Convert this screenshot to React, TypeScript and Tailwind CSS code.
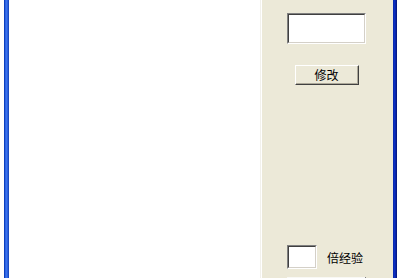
import React from "react";

const cjk = "font-['SimSun','Noto_Sans_CJK_SC',sans-serif]";

function SunkenBox({ className }: { className: string }) {
  // classic sunken edit box: dark top/left, light bottom/right
  return (
    <div
      className={`border-t-[#808080] border-l-[#808080] border-b-[#ffffff] border-r-[#ffffff] border ${className}`}
    >
      <div className="h-full w-full border border-t-[#404040] border-l-[#404040] border-b-[#d4d0c8] border-r-[#d4d0c8] bg-white" />
    </div>
  );
}

export default function App() {
  return (
    <div className="flex h-[278px] w-[401px] overflow-hidden bg-white">
      {/* left window frame */}
      <div className="w-[4px] bg-white" />
      <div className="flex w-[5px]">
        <div className="w-px bg-[#0b3fc0]" />
        <div className="w-px bg-[#2e64e0]" />
        <div className="w-px bg-[#3a72ee]" />
        <div className="w-px bg-[#2d62dc]" />
        <div className="w-px bg-[#1a4ac4]" />
      </div>

      {/* list area */}
      <div className="w-[251px] bg-white" />
      <div className="w-px bg-[#f2f1ec]" />
      <div className="w-px bg-white" />

      {/* control panel */}
      <div className="flex w-[131px] flex-col bg-[#ece9d8] pl-[25px] pt-[13px]">
        <SunkenBox className="h-[31px] w-[79px]" />

        <button
          className={`mt-[21px] ml-[8px] flex h-[20px] w-[64px] items-center justify-center border border-t-white border-l-white border-b-[#404040] border-r-[#404040] bg-[#ece9d8] text-[12px] leading-none text-black ${cjk}`}
        >
          <span className="flex h-full w-full items-center justify-center border-b border-r border-b-[#aca899] border-r-[#aca899]">
            修改
          </span>
        </button>

        <div className="mt-[160px] flex items-center">
          <SunkenBox className="h-[24px] w-[30px]" />
          <span className={`ml-[10px] mt-[2px] text-[12px] leading-none text-black ${cjk}`}>
            倍经验
          </span>
        </div>

        <div className="mt-[8px] flex h-px w-[79px]">
          <div className="flex-1 bg-[#f8f8f4]" />
          <div className="w-px bg-[#808080]" />
        </div>
      </div>

      {/* right window frame */}
      <div className="flex w-[4px]">
        <div className="w-px bg-[#0a2ab0]" />
        <div className="w-px bg-[#0b2fc4]" />
        <div className="w-px bg-[#0a26a8]" />
        <div className="w-px bg-[#051a86]" />
      </div>
      <div className="flex-1 bg-white" />
    </div>
  );
}
